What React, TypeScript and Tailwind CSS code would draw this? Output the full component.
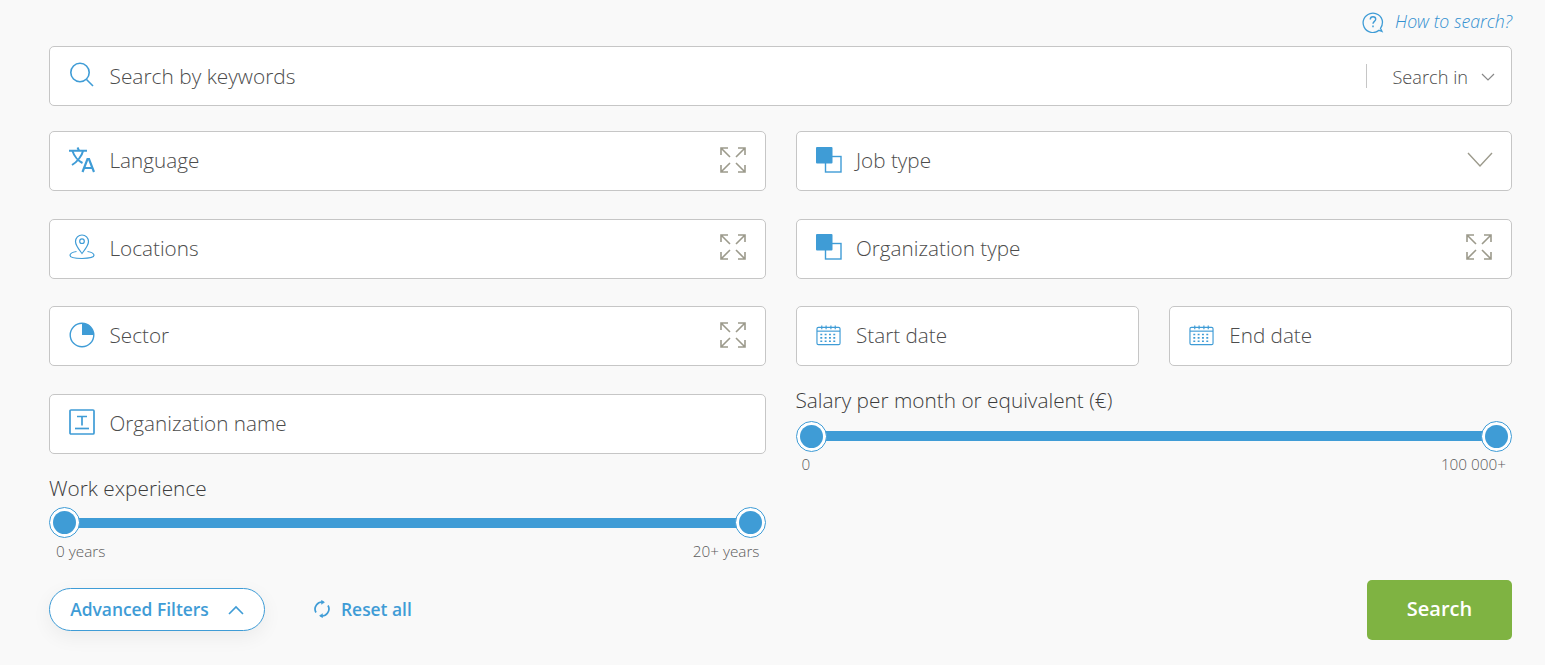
import type { ReactNode } from "react";

const blue = "#3f9cd6";

function ExpandIcon() {
  return (
    <svg className="-mt-[3px]" width="28" height="28" viewBox="0 0 28 28" fill="none" stroke="#9c9a8c" strokeWidth="1.6">
      <path d="M2 9V2h7M2 2l9 9" />
      <path d="M26 9V2h-7M26 2l-9 9" />
      <path d="M2 19v7h7M2 26l9-9" />
      <path d="M26 19v7h-7M26 26l-9-9" />
    </svg>
  );
}

function SquaresIcon() {
  return (
    <svg className="-mt-[3px]" width="26" height="26" viewBox="0 0 26 26">
      <rect x="9.500" y="9.500" width="15.500" height="15.500" fill="#fff" stroke={blue} strokeWidth="1.400" />
      <rect x="0" y="0" width="16.500" height="16.500" rx="1" fill={blue} />
    </svg>
  );
}

function SearchIcon() {
  return (
    <svg className="-mt-[3px]" width="26" height="26" viewBox="0 0 26 26" fill="none" stroke={blue} strokeWidth="1.600">
      <circle cx="11" cy="10.500" r="9.200" />
      <path d="M17.500 17.500l6.500 6.500" />
    </svg>
  );
}

function LanguageIcon() {
  return (
    <svg className="-mt-[3px]" width="26" height="26" viewBox="0 0 26 26" fill="none" stroke={blue}>
      <path d="M0 3.800h18M8.500 0.500l1.500 3" strokeWidth="2" />
      <path d="M3.500 4c1.500 5 6 10 10 12M14 4c-1 5-6 11-11 14" strokeWidth="2" />
      <path d="M13.500 25l5-13h1.500l5 13M15.500 21h8" strokeWidth="2.200" />
    </svg>
  );
}

function PinIcon() {
  return (
    <svg className="-mt-[3px]" width="26" height="26" viewBox="0 0 26 26" fill="none" stroke={blue} strokeWidth="1.200">
      <path d="M13 19.500c-3-4-6.500-8-6.500-12a6.500 6.500 0 0 1 13 0c0 4-3.500 8-6.500 12z" />
      <circle cx="13" cy="7.200" r="2.300" />
      <path d="M7.500 17.500C3.500 18.200 1 19.500 1 21.300c0 2 5 3.200 12 3.200s12-1.200 12-3.200c0-1.800-2.500-3.100-6.500-3.800" />
    </svg>
  );
}

function PieIcon() {
  return (
    <svg className="-mt-[3px]" width="26" height="26" viewBox="0 0 26 26" fill="none">
      <circle cx="13" cy="13" r="11.800" stroke={blue} strokeWidth="1.400" />
      <path d="M13 1.200A11.800 11.800 0 0 1 24.800 13H13z" fill={blue} />
    </svg>
  );
}

function TextBoxIcon() {
  return (
    <svg className="-mt-[3px]" width="26" height="26" viewBox="0 0 26 26" fill="none" stroke={blue}>
      <rect x="1" y="1" width="24" height="24" rx="1" strokeWidth="1.700" />
      <path d="M8 7.500h10M13 7.500v9" strokeWidth="1.700" />
      <path d="M6 19.500h14" strokeWidth="1.700" />
    </svg>
  );
}

function CalendarIcon() {
  return (
    <svg className="-mt-[3px]" width="25" height="22" viewBox="0 0 26 22" fill="none" stroke={blue}>
      <rect x="1" y="3" width="24" height="18" rx="1.500" strokeWidth="1.200" />
      <path d="M1 7h24" strokeWidth="1.200" />
      <path d="M6 1v4M10.500 1v4M15.500 1v4M20 1v4" strokeWidth="1.200" />
      <path
        d="M4.500 10.500h2M9 10.500h2M13.500 10.500h2M18 10.500h2M4.500 14h2M9 14h2M13.500 14h2M18 14h2M4.500 17.500h2M9 17.500h2M13.500 17.500h2M18 17.500h2"
        strokeWidth="1.700"
      />
    </svg>
  );
}

function HelpIcon() {
  return (
    <svg width="22" height="22" viewBox="0 0 22 22" fill="none" stroke={blue} strokeWidth="1.300">
      <path d="M20 20.500l-3-1.200A9.700 9.700 0 1 1 20.500 11c0 2.600-.8 4.700-2 6.300z" />
      <path d="M8.300 8.500c0-1.700 1.200-2.700 2.700-2.700s2.700 1 2.700 2.500c0 2-2.700 2.200-2.700 4.400" strokeWidth="1.400" />
      <path d="M11 14.500v1.800" strokeWidth="1.500" />
    </svg>
  );
}

function ResetIcon() {
  return (
    <svg width="18" height="18" viewBox="0 0 18 18" fill="none" stroke={blue} strokeWidth="1.700">
      <path d="M3 12.500A7 7 0 0 1 10.500 2.200" />
      <path d="M15 5.500A7 7 0 0 1 7.500 15.800" />
      <path d="M8.500 0.300l3 2-3 2z" fill={blue} strokeWidth="0.500" />
      <path d="M9.500 13.700l-3 2 3 2z" fill={blue} strokeWidth="0.500" />
    </svg>
  );
}

function Field({
  icon,
  label,
  right,
  className = "",
  labelClassName = "",
}: {
  icon: ReactNode;
  label: string;
  right?: ReactNode;
  className?: string;
  labelClassName?: string;
}) {
  return (
    <div
      className={`flex h-[60px] items-center rounded-[5px] border border-[#c6c6c6] bg-white pl-[19px] pr-[18px] ${className}`}
    >
      <span className="flex w-[40.500px] shrink-0 items-center">{icon}</span>
      <span className={`flex-1 text-[20.700px] font-light text-[#4c4c4c] ${labelClassName}`}>{label}</span>
      {right}
    </div>
  );
}

function RangeSlider({ min, max, minClassName = "" }: { min: string; max: string; minClassName?: string }) {
  return (
    <div>
      <div className="relative flex h-[32px] items-center">
        <div className="mx-[8px] h-[10px] flex-1 bg-[#3f9cd6]" />
        <span className="absolute left-0 h-[31px] w-[31px] rounded-full border border-[#3f9cd6] bg-white p-[3px]">
          <span className="block h-full w-full rounded-full bg-[#3f9cd6]" />
        </span>
        <span className="absolute right-0 h-[31px] w-[31px] rounded-full border border-[#3f9cd6] bg-white p-[3px]">
          <span className="block h-full w-full rounded-full bg-[#3f9cd6]" />
        </span>
      </div>
      <div className="mt-[3px] flex justify-between px-[6px] text-[15.300px] font-light leading-[19px] text-[#5c5c5c]">
        <span className={minClassName}>{min}</span>
        <span>{max}</span>
      </div>
    </div>
  );
}

export default function App() {
  return (
    <div className="h-[665px] bg-[#f9f9f9] pl-[49px] pr-[33px] font-['Open_Sans',sans-serif]">
      <div className="flex h-[46px] items-center justify-end gap-[11px] pb-[3px]">
        <HelpIcon />
        <a className="text-[17.700px] font-light italic text-[#3390d0]">How to search?</a>
      </div>

      <Field
        icon={<SearchIcon />}
        label="Search by keywords"
        className="!pr-[16px]"
        labelClassName="pt-[2px] !text-[20.900px]"
        right={
          <div className="flex items-center">
            <span className="ml-[1px] h-[24px] w-px bg-[#c6c6c6]" />
            <span className="ml-[25px] pt-[4px] text-[18.200px] font-light text-[#4c4c4c]">Search in</span>
            <svg className="ml-[13px] mt-[3px]" width="14" height="9" viewBox="0 0 14 9" fill="none" stroke="#888" strokeWidth="1.200">
              <path d="M1 1l6 6 6-6" />
            </svg>
          </div>
        }
      />

      <div className="mt-[25px] grid grid-cols-2 gap-x-[30px]">
        <div className="flex flex-col gap-[27.500px]">
          <Field icon={<LanguageIcon />} label="Language" right={<ExpandIcon />} />
          <Field icon={<PinIcon />} label="Locations" right={<ExpandIcon />} />
          <Field icon={<PieIcon />} label="Sector" right={<ExpandIcon />} />
          <Field icon={<TextBoxIcon />} label="Organization name" />
          <div className="-mt-[6.500px]">
            <div className="text-[20.800px] font-light leading-[27px] text-[#3c3c3c]">Work experience</div>
            <div className="mt-[5px]">
              <RangeSlider min="0 years" max="20+ years" minClassName="pl-[1px]" />
            </div>
          </div>
        </div>

        <div className="flex flex-col gap-[27.500px]">
          <Field
            icon={<SquaresIcon />}
            label="Job type"
            right={
              <svg className="-mt-[3px]" width="26" height="16" viewBox="0 0 26 16" fill="none" stroke="#9c9a8c" strokeWidth="1.400">
                <path d="M1 1l12 13L25 1" />
              </svg>
            }
          />
          <Field icon={<SquaresIcon />} label="Organization type" right={<ExpandIcon />} />
          <div className="grid grid-cols-2 gap-x-[30px]">
            <Field icon={<CalendarIcon />} label="Start date" />
            <Field icon={<CalendarIcon />} label="End date" />
          </div>
          <div className="-mt-[6.500px]">
            <div className="text-[20.800px] font-light leading-[27px] text-[#3c3c3c]">
              Salary per month or equivalent (€)
            </div>
            <div className="mt-[6px]">
              <RangeSlider min="0" max="100 000+" />
            </div>
          </div>
        </div>
      </div>

      <div className="mt-[19px] flex items-center justify-between">
        <div className="flex items-center">
          <button className="flex h-[43px] w-[216px] items-center justify-center gap-[19px] rounded-full border border-[#3f9cd6] bg-white text-[17.400px] font-semibold text-[#3f9cd6] shadow-[0_6px_20px_rgba(0,0,0,0.06)]">
            Advanced Filters
            <svg width="16" height="10" viewBox="0 0 16 10" fill="none" stroke={blue} strokeWidth="1.600">
              <path d="M1 9l7-7 7 7" />
            </svg>
          </button>
          <span className="ml-[48px] flex items-center gap-[10px] text-[17.400px] font-semibold text-[#3f9cd6]">
            <ResetIcon />
            Reset all
          </span>
        </div>
        <button className="h-[60px] w-[145px] rounded-[5px] bg-[#7fb342] pb-[2px] text-[20px] font-semibold text-white">
          Search
        </button>
      </div>
    </div>
  );
}
